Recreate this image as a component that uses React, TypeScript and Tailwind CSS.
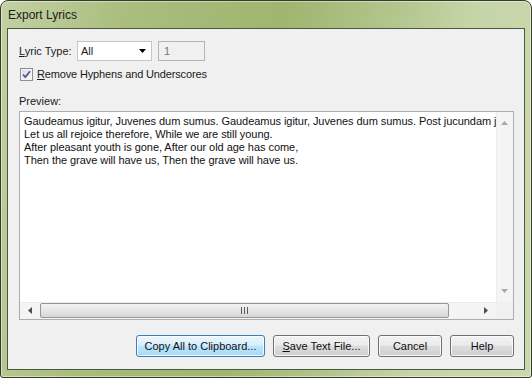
import React from "react";

const LINES = [
  "Gaudeamus igitur, Juvenes dum sumus. Gaudeamus igitur, Juvenes dum sumus. Post jucundam juventutem, Post molestam senectutem, Nos habebit humus.",
  "Let us all rejoice therefore, While we are still young.",
  "After pleasant youth is gone, After our old age has come,",
  "Then the grave will have us, Then the grave will have us.",
];

const Button = ({ label, under, rest, primary, w }: { label?: string; under?: string; rest?: string; primary?: boolean; w: string }) => (
  <button
    className={`${w} h-[22px] rounded-[3px] border text-[11px] text-[#111] shadow-[inset_0_0_0_1px_rgba(255,255,255,0.8)] ${
      primary
        ? "border-[#3c7fb1] bg-[linear-gradient(#eaf6fd_0%,#d9f0fc_45%,#bee6fd_50%,#a7d9f5_100%)]"
        : "border-[#707070] bg-[linear-gradient(#f2f2f2_0%,#ebebeb_45%,#dddddd_50%,#cfcfcf_100%)]"
    }`}
  >
    {under ? (
      <>
        <span className="underline underline-offset-1">{under}</span>
        {rest}
      </>
    ) : (
      label
    )}
  </button>
);

const App = () => {
  return (
    <div className="w-[532px] h-[378px] bg-white font-['Liberation_Sans',Arial,sans-serif]">
      <div className="flex h-full flex-col rounded-t-[8px] rounded-b-[3px] border border-[#353c2a] bg-[linear-gradient(100deg,#c3d1a4_0%,#a9bd7d_22%,#a0b56f_48%,#b2c58c_66%,#c6d5a7_80%,#cad8ad_100%)] shadow-[inset_0_0_0_1px_rgba(255,255,255,0.45)]">
        {/* title bar */}
        <div className="flex h-[27px] shrink-0 items-center pl-[7px] pt-[1px] text-[12px] text-[#1b1b1b]">
          Export Lyrics
        </div>

        {/* client area */}
        <div className="mx-[6px] mb-[7px] flex flex-1 flex-col border border-[#4d573f] bg-[#f0f0f0] pl-[11px] pr-[10px] text-[11px] text-[#1a1a1a]">
          <div className="mt-[12px] flex h-[20px] items-center">
            <span className="w-[58px]">
              <span className="underline underline-offset-1">L</span>yric Type:
            </span>
            <div className="flex h-[20px] w-[75px] items-center justify-between border border-[#c5c5c5] bg-white pl-[3px] pr-[5px]">
              <span>All</span>
              <svg width="7" height="4" viewBox="0 0 7 4">
                <path d="M0 0h7L3.5 4z" fill="#000" />
              </svg>
            </div>
            <div className="ml-[6px] flex h-[20px] w-[47px] items-center border border-[#b5b5b5] bg-[#f0f0f0] pl-[5px] text-[#777]">
              1
            </div>
          </div>

          <div className="mt-[6px] flex h-[14px] items-center">
            <div className="ml-[1px] flex h-[13px] w-[13px] items-center justify-center border border-[#8e8f8f] bg-[linear-gradient(135deg,#dcdcdc,#fbfbfb)] shadow-[inset_0_0_0_1px_#f4f4f4]">
              <svg width="9" height="9" viewBox="0 0 9 9">
                <path d="M1 4.5l2.3 2.6L8 1.2" stroke="#4a5f97" strokeWidth="1.8" fill="none" />
              </svg>
            </div>
            <span className="ml-[4px] tracking-[-0.15px]">
              <span className="underline underline-offset-1">R</span>emove Hyphens and Underscores
            </span>
          </div>

          <div className="mt-[14px] leading-[13px]">Preview:</div>

          {/* preview box */}
          <div className="mt-[3px] flex h-[209px] w-[495px] flex-col border border-[#abadb3] bg-white">
            <div className="flex min-h-0 flex-1">
              <div className="flex-1 overflow-hidden whitespace-nowrap pl-[4px] pt-[3px] leading-[13px] tracking-[-0.05px] text-[#111]">
                {LINES.map((l) => (
                  <div key={l}>{l}</div>
                ))}
              </div>
              <div className="flex w-[17px] flex-col items-center justify-between bg-[#f4f4f4] py-[9px] shadow-[inset_1px_0_0_#ececec]">
                <svg width="7" height="4" viewBox="0 0 7 4">
                  <path d="M0 4h7L3.5 0z" fill="#a8a8a8" />
                </svg>
                <svg width="7" height="4" viewBox="0 0 7 4">
                  <path d="M0 0h7L3.5 4z" fill="#a8a8a8" />
                </svg>
              </div>
            </div>
            <div className="flex h-[17px] shrink-0">
              <div className="flex flex-1 items-center bg-[#f4f4f4] shadow-[inset_0_1px_0_#ececec]">
                <div className="flex w-[20px] justify-center">
                  <svg width="4" height="7" viewBox="0 0 4 7">
                    <path d="M4 0v7L0 3.5z" fill="#4d4d4d" />
                  </svg>
                </div>
                <div className="flex h-[15px] w-[409px] items-center justify-center rounded-[2px] border border-[#979797] bg-[linear-gradient(#f3f3f3,#e6e6e6_50%,#d6d6d6)]">
                  <div className="flex gap-[2px]">
                    <div className="h-[7px] w-[1px] bg-[#5a5a5a]" />
                    <div className="h-[7px] w-[1px] bg-[#5a5a5a]" />
                    <div className="h-[7px] w-[1px] bg-[#5a5a5a]" />
                  </div>
                </div>
                <div className="flex-1" />
                <div className="flex w-[20px] justify-center">
                  <svg width="4" height="7" viewBox="0 0 4 7">
                    <path d="M0 0v7L4 3.5z" fill="#4d4d4d" />
                  </svg>
                </div>
              </div>
              <div className="w-[17px] bg-[#f0f0f0]" />
            </div>
          </div>

          <div className="mt-[15px] flex justify-end gap-[8px]">
            <Button label="Copy All to Clipboard..." primary w="w-[129px]" />
            <Button under="S" rest="ave Text File..." w="w-[97px]" />
            <Button label="Cancel" w="w-[64px]" />
            <Button label="Help" w="w-[64px]" />
          </div>
        </div>
      </div>
    </div>
  );
};

export default App;
